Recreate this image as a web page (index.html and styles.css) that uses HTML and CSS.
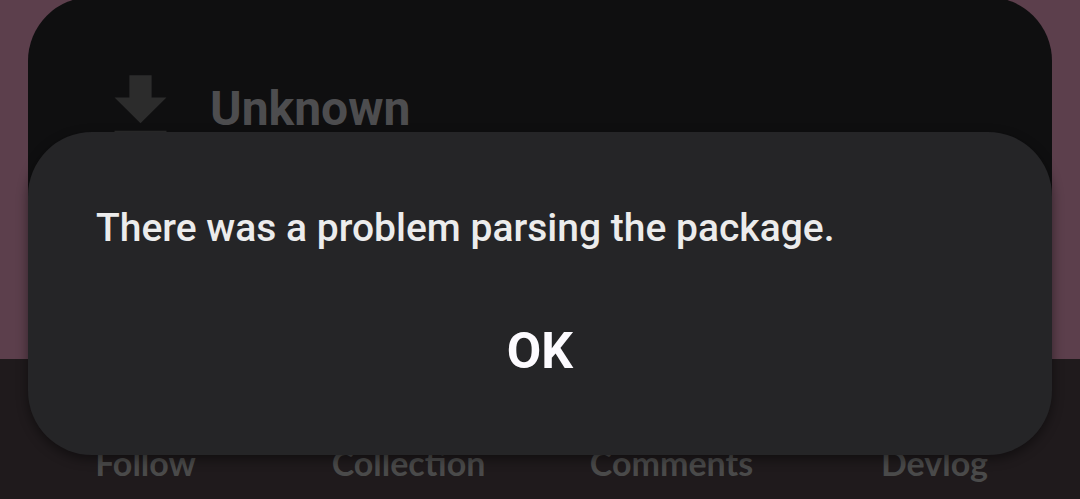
FILE: index.html
```html
<!DOCTYPE html>
<html lang="en">
<head>
    <meta charset="UTF-8">
    <meta name="viewport" content="width=device-width, initial-scale=1.0">
    <title>Package Installer</title>
    <link rel="stylesheet" href="styles.css">
</head>
<body>

    <!-- Page behind the installer -->
    <div class="page-top">
        <div class="install-sheet">
            <div class="app-header">
                <svg class="download-icon" viewBox="0 0 24 24" aria-hidden="true">
                    <path d="M19 9h-4V3H9v6H5l7 7 7-7zM5 18v2h14v-2H5z"/>
                </svg>
                <h2>Unknown</h2>
            </div>
        </div>
    </div>

    <!-- Bottom tabs -->
    <nav class="tab-bar">
        <span>Follow</span>
        <span>Collection</span>
        <span>Comments</span>
        <span>Devlog</span>
    </nav>

    <!-- Error dialog -->
    <div class="dialog">
        <p class="dialog-message">There was a problem parsing the package.</p>
        <button class="dialog-button">OK</button>
    </div>

</body>
</html>
```

FILE: styles.css
```css
/* Global Styles */
* {
    margin: 0;
    padding: 0;
    box-sizing: border-box;
}

body {
    width: 1080px;
    height: 499px;
    overflow: hidden;
    position: relative;
    background: #1f1a1c;
    font-family: 'Roboto', 'Noto Sans', sans-serif;
}

/* TOP AREA */
.page-top {
    height: 359px;
    background: #5c3f4c;
    padding: 0 28px;
    overflow: hidden;
}

.install-sheet {
    margin-top: -3px;
    height: 320px;
    background: #0f0f10;
    border-radius: 64px 64px 0 0;
    padding: 67px 68px 0;
}

.app-header {
    display: flex;
    align-items: center;
    gap: 25px;
}

.download-icon {
    width: 89px;
    height: 89px;
    fill: #2c2c2c;
    flex-shrink: 0;
}

.app-header h2 {
    font-size: 48px;
    line-height: 56px;
    font-weight: 700;
    color: #4d4d4f;
}

/* TAB BAR */
.tab-bar {
    display: grid;
    grid-template-columns: repeat(4, 1fr);
    padding: 84px 14px 0;
    font-family: 'Lato', sans-serif;
    font-weight: 700;
    font-size: 34px;
    line-height: 40px;
    color: #4a4a4a;
    text-align: center;
}

/* DIALOG */
.dialog {
    position: absolute;
    top: 132px;
    left: 28px;
    width: 1024px;
    height: 323px;
    background: #252527;
    border-radius: 64px;
    box-shadow: 0 4px 12px rgba(0, 0, 0, 0.45);
    padding: 74px 68px 0;
    display: flex;
    flex-direction: column;
}

.dialog-message {
    font-size: 39px;
    line-height: 44px;
    font-weight: 500;
    color: #ececec;
}

.dialog-button {
    margin-top: 71px;
    align-self: center;
    background: none;
    border: none;
    font-family: 'Roboto', sans-serif;
    font-size: 50px;
    line-height: 60px;
    font-weight: 700;
    color: #fdfbff;
    cursor: pointer;
}
```
